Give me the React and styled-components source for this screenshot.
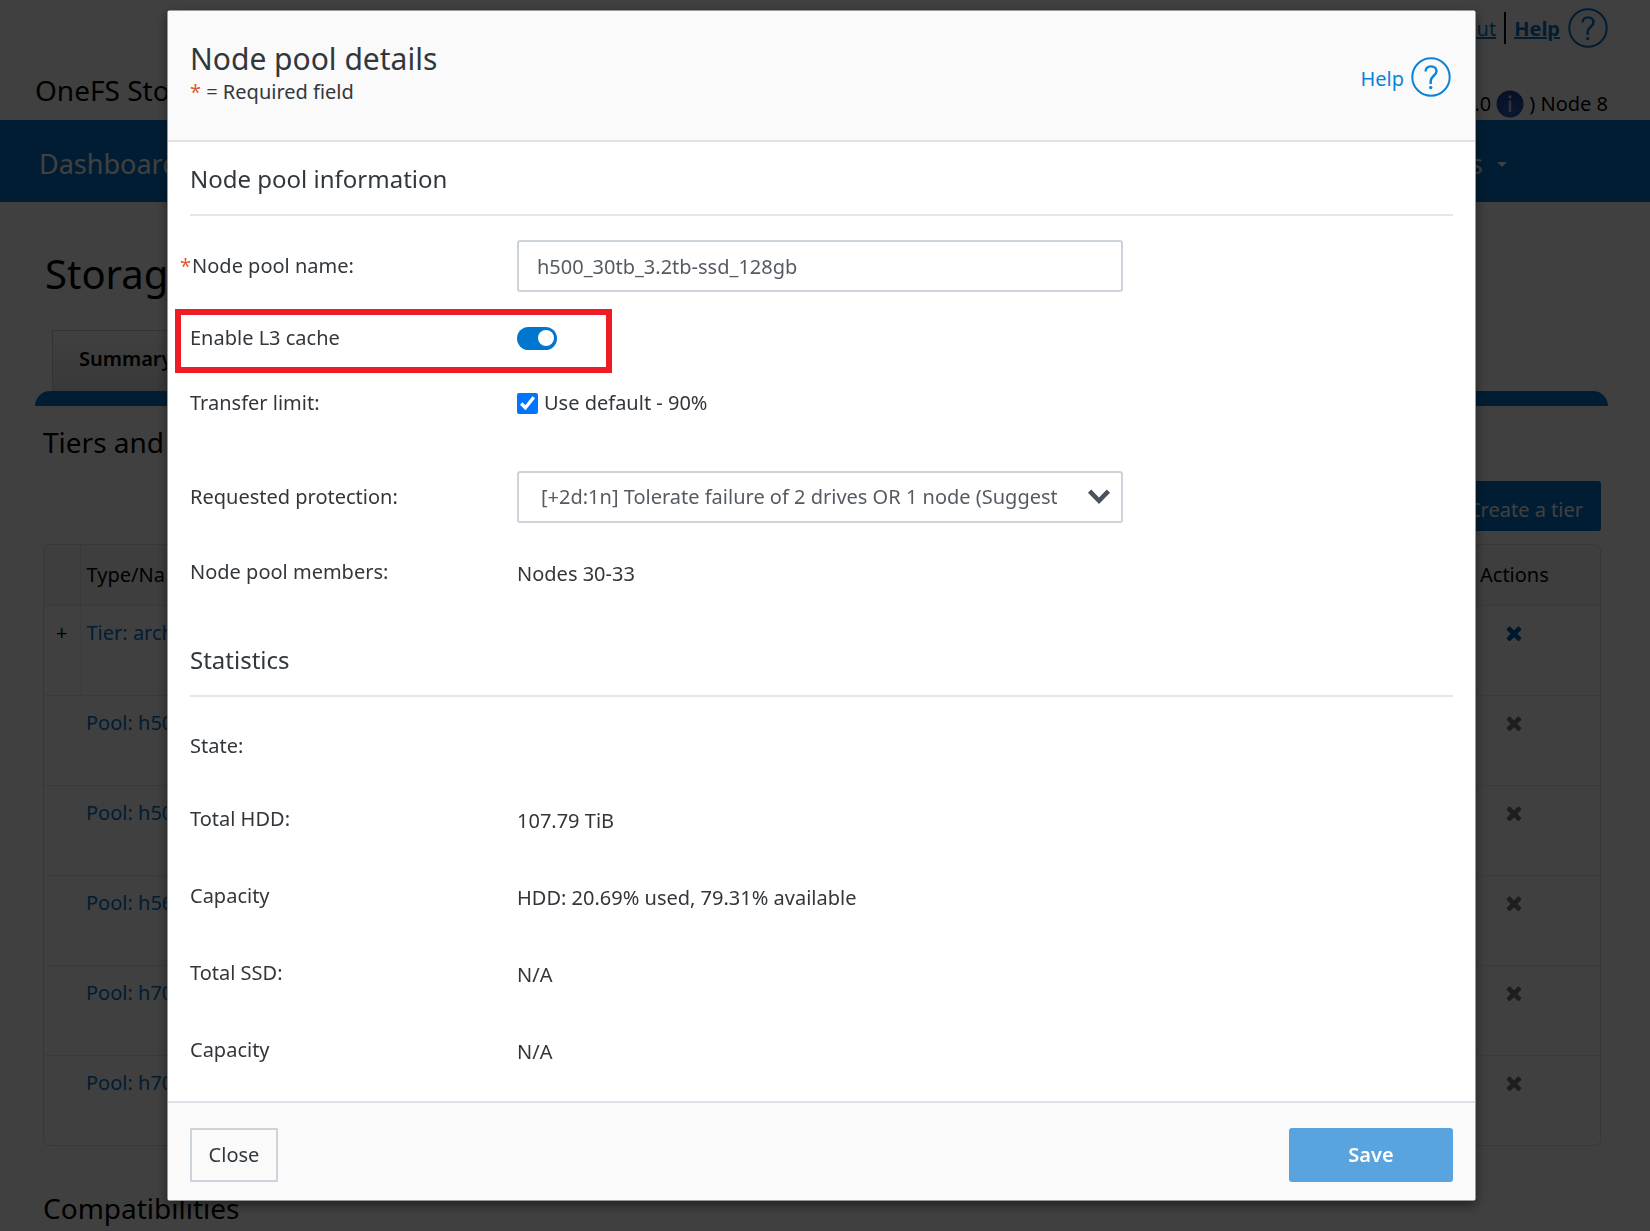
import React from "react";
import styled, { createGlobalStyle } from "styled-components";

const blue = "#0076ce";

const GlobalStyle = createGlobalStyle`
  *, *::before, *::after { box-sizing: border-box; }
  body {
    margin: 0;
    background: #fff;
    color: #000;
    font-family: "Noto Sans", "Open Sans", sans-serif;
    font-size: 20px;
    line-height: 28px;
  }
  button, input, select { font: inherit; color: inherit; }
  h1, h2, h3, p { margin: 0; font-weight: 400; }
`;

/* ---------- page behind the dialog ---------- */

const Page = styled.div`
  height: 100vh;
  overflow: hidden;
  background: #fff;
`;

const Masthead = styled.header`
  display: flex;
  justify-content: space-between;
  align-items: flex-end;
  height: 120px;
  padding: 0 42px 0 35px;
`;

const Product = styled.div`
  font-size: 28px;
  line-height: 36px;
  padding-bottom: 12px;
`;

const MastheadSide = styled.div`
  display: flex;
  flex-direction: column;
  align-items: flex-end;
  gap: 40px;
`;

const Links = styled.div`
  display: flex;
  align-items: center;
  gap: 8px;
  height: 40px;
`;

const MastLink = styled.a`
  padding-top: 2px;
  color: ${blue};
  font-weight: ${(p) => (p.$strong ? 700 : 400)};
`;

const IconLink = styled.a`
  display: flex;
  color: ${blue};
`;

const Bar = styled.span`
  width: 2px;
  height: 32px;
  background: #000;
`;

const ClusterInfo = styled.div`
  display: flex;
  align-items: center;
  gap: 5px;
  height: 32px;
`;

const NavBar = styled.nav`
  display: flex;
  justify-content: space-between;
  align-items: center;
  height: 82px;
  padding: 6px 143px 0 39px;
  background: ${blue};
`;

const NavItem = styled.a`
  display: flex;
  align-items: center;
  gap: 14px;
  color: #fff;
  font-size: 27px;
  line-height: 32px;
  text-decoration: none;
`;

const Caret = styled.span`
  border: 5px solid transparent;
  border-top-color: #fff;
  border-bottom: 0;
`;

const Main = styled.main`
  padding: 44px 42px 0 35px;
`;

const PageTitle = styled.h1`
  font-size: 40px;
  line-height: 56px;
  padding-left: 10px;
`;

const Tabs = styled.div`
  display: flex;
  margin-top: 28px;
  padding-left: 17px;
`;

const Tab = styled.button`
  height: 61px;
  padding: 0 26px 4px;
  border: 1px solid #ccc;
  border-bottom: 0;
  background: linear-gradient(#fff, #e0e0e0);
  font-weight: 600;
`;

const TabLine = styled.div`
  height: 15px;
  border-radius: 16px 16px 0 0;
  background: ${blue};
`;

const Panel = styled.section`
  padding: 16px 7px 0 8px;
`;

const PanelTitle = styled.h2`
  font-size: 28px;
  line-height: 40px;
`;

const Actions = styled.div`
  display: flex;
  justify-content: flex-end;
  padding: 19px 0 13px;
`;

const CreateButton = styled.button`
  height: 50px;
  padding: 8px 18px 0;
  border: 0;
  border-radius: 3px;
  background: ${blue};
  color: #fff;
`;

const TableFrame = styled.div`
  border: 1px solid #ddd;
  border-radius: 6px;
  overflow: hidden;
  margin-bottom: 42px;
`;

const Table = styled.table`
  width: 100%;
  border-collapse: collapse;
  table-layout: fixed;
`;

const HeadCell = styled.th`
  width: ${(p) => p.$width || "auto"};
  height: 60px;
  padding: ${(p) => (p.$action ? "0 0 0 4px" : "0 6px")};
  border-right: ${(p) => (p.$ruled ? "1px solid #ddd" : "0")};
  background: #f8f8f8;
  font-weight: 400;
  text-align: left;
`;

const Cell = styled.td`
  height: 90px;
  padding: 13px ${(p) => (p.$center ? "0" : "6px")};
  border-top: 1px solid #e8e8e8;
  border-right: ${(p) => (p.$ruled ? "1px solid #eee" : "0")};
  text-align: ${(p) => (p.$center ? "center" : "left")};
  vertical-align: top;
`;

const ActionCell = styled(Cell)`
  padding-left: 27px;
`;

const NameLink = styled.a`
  color: ${blue};
  text-decoration: none;
`;

const IconButton = styled.button`
  display: flex;
  padding: 3px 0;
  border: 0;
  background: none;
  color: ${(p) => (p.$active ? "#0060b0" : "#777")};
`;

const Expand = styled.button`
  padding: 0;
  border: 0;
  background: none;
`;

/* ---------- dialog ---------- */

const Backdrop = styled.div`
  position: fixed;
  inset: 0;
  display: flex;
  align-items: flex-start;
  padding: 10px 174px 0 167px;
  background: rgba(0, 0, 0, 0.75);
`;

const Dialog = styled.form`
  flex: 1;
  min-width: 0;
  border: 1px solid #999;
  border-radius: 3px;
  background: #fff;
  box-shadow: 0 4px 12px rgba(0, 0, 0, 0.5);
  color: #32373c;
`;

const DialogHeader = styled.header`
  display: flex;
  justify-content: space-between;
  align-items: flex-start;
  height: 131px;
  padding: 28px 22px 0;
  border-bottom: 2px solid #dfe2e8;
  background: #fafafa;
`;

const DialogTitle = styled.h2`
  font-size: 30px;
  line-height: 39px;
`;

const Star = styled.span`
  color: #e05a33;
`;

const HelpLink = styled.a`
  display: flex;
  align-items: center;
  gap: 7px;
  height: 76px;
  padding-right: 2px;
  color: #0a84d8;
  text-decoration: none;
`;

const HelpText = styled.span`
  padding-top: 4px;
`;

const DialogBody = styled.div`
  padding: 2px 22px 11px;
`;

const SectionTitle = styled.h3`
  display: flex;
  align-items: center;
  height: 72px;
  margin-bottom: 16px;
  border-bottom: 2px solid #e6e6e6;
  font-size: 24px;
  line-height: 32px;
`;

const Row = styled.div`
  position: relative;
  display: grid;
  grid-template-columns: 327px 1fr;
  align-items: center;
  min-height: ${(p) => p.$height}px;
  margin-bottom: ${(p) => p.$after || 0}px;
`;

const Label = styled.label`
  padding-bottom: ${(p) => (p.$raised ? 4 : 0)}px;
`;

const RequiredLabel = styled(Label)`
  display: flex;
  gap: 1px;
  margin-left: -10px;
`;

const control = `
  width: 100%;
  max-width: 606px;
  height: 52px;
  border: 2px solid #cdd3db;
  border-radius: 3px;
  background: #fff;
`;

const TextInput = styled.input`
  ${control}
  padding: 0 18px;
  color: #555b63;
`;

const SelectBox = styled.div`
  position: relative;
  max-width: 606px;

  svg {
    position: absolute;
    right: 12px;
    top: 14px;
    pointer-events: none;
  }
`;

const Select = styled.select`
  ${control}
  appearance: none;
  padding: 0 64px 0 22px;
  color: #555b63;
`;

const Switch = styled.input`
  appearance: none;
  display: flex;
  align-items: center;
  justify-content: flex-end;
  width: 40px;
  height: 23px;
  margin: 0;
  padding: 0 3px;
  border-radius: 12px;
  background: #0076ce;

  &::before {
    content: "";
    width: 16px;
    height: 16px;
    border-radius: 50%;
    background: #fff;
  }

  &:not(:checked) {
    justify-content: flex-start;
    background: #999;
  }
`;

const CheckLabel = styled.label`
  display: flex;
  align-items: center;
  gap: 6px;
`;

const Checkbox = styled.input`
  width: 21px;
  height: 21px;
  margin: 0;
  accent-color: #0075ff;
`;

const Highlight = styled.div`
  position: absolute;
  left: -15px;
  top: 7px;
  width: 437px;
  height: 64px;
  border: 6px solid #ee1c25;
  pointer-events: none;
`;

const DialogFooter = styled.footer`
  display: flex;
  justify-content: space-between;
  align-items: center;
  height: 99px;
  padding: 6px 22px 0;
  border-top: 2px solid #dfe2e8;
  background: #fafafa;
`;

const Button = styled.button`
  width: ${(p) => (p.$primary ? 164 : 88)}px;
  height: 54px;
  border: ${(p) => (p.$primary ? "0" : "2px solid #cdd3db")};
  border-radius: ${(p) => (p.$primary ? 3 : 1)}px;
  background: ${(p) => (p.$primary ? "#59a4de" : "#fafafa")};
  color: ${(p) => (p.$primary ? "#fff" : "#32373c")};
  font-weight: ${(p) => (p.$primary ? 600 : 400)};
`;

const HelpIcon = () => (
  <svg width="40" height="40" viewBox="0 0 40 40" fill="none" stroke="currentColor" aria-hidden="true">
    <circle cx="20" cy="20" r="18.7" strokeWidth="2" />
    <path d="M14.6 14.4c0-3.1 2.2-5 5.4-5s5.5 1.9 5.5 4.8c0 4.4-5.8 4.8-5.8 9.9v3" strokeWidth="2.4" />
    <circle cx="19.7" cy="30.6" r="1.7" fill="currentColor" stroke="none" />
  </svg>
);

const InfoIcon = () => (
  <svg width="28" height="28" viewBox="0 0 28 28" aria-hidden="true">
    <defs>
      <radialGradient id="ball" cx="50%" cy="75%" r="70%">
        <stop offset="0" stopColor="#2f62c8" />
        <stop offset="1" stopColor="#1b3f94" />
      </radialGradient>
    </defs>
    <circle cx="14" cy="14" r="13.5" fill="url(#ball)" />
    <circle cx="14" cy="6.8" r="1.6" fill="#ccc" />
    <path d="M14 10.4v11.6" stroke="#ccc" strokeWidth="2.4" />
  </svg>
);

const CrossIcon = () => (
  <svg width="22" height="22" viewBox="0 0 1792 1792" fill="currentColor" aria-hidden="true">
    <path d="M1490 1322q0 40-28 68l-136 136q-28 28-68 28t-68-28l-294-294-294 294q-28 28-68 28t-68-28l-136-136q-28-28-28-68t28-68l294-294-294-294q-28-28-28-68t28-68l136-136q28-28 68-28t68 28l294 294 294-294q28-28 68-28t68 28l136 136q28 28 28 68t-28 68l-294 294 294 294q28 28 28 68z" />
  </svg>
);

const Chevron = () => (
  <svg width="24" height="24" viewBox="0 0 24 24" fill="none" stroke="#4a525b" strokeWidth="4.6" aria-hidden="true">
    <path d="M2.6 6.2 12 15.8l9.4-9.6" />
  </svg>
);

const pools = ["Tier: arch", "Pool: h50", "Pool: h50", "Pool: h56", "Pool: h70", "Pool: h70"];
const stats = [
  ["State:", ""],
  ["Total HDD:", "107.79 TiB"],
  ["Capacity", "HDD: 20.69% used, 79.31% available"],
  ["Total SSD:", "N/A"],
  ["Capacity", "N/A"],
];

export default function App() {
  return (
    <>
      <GlobalStyle />
      <Page>
        <Masthead>
          <Product>OneFS Sto</Product>
          <MastheadSide>
            <Links>
              <MastLink href="#logout">Log out</MastLink>
              <Bar />
              <MastLink href="#help" $strong>Help</MastLink>
              <IconLink href="#help" aria-label="Help"><HelpIcon /></IconLink>
            </Links>
            <ClusterInfo>
              <span>.0</span>
              <InfoIcon />
              <span>) Node 8</span>
            </ClusterInfo>
          </MastheadSide>
        </Masthead>
        <NavBar>
          <NavItem href="#dashboard">Dashboard</NavItem>
          <NavItem href="#protocols">Protocols<Caret /></NavItem>
        </NavBar>
        <Main>
          <PageTitle>Storag</PageTitle>
          <Tabs><Tab type="button">Summary</Tab></Tabs>
          <TabLine />
          <Panel>
            <PanelTitle>Tiers and</PanelTitle>
            <Actions><CreateButton type="button">Create a tier</CreateButton></Actions>
            <TableFrame>
              <Table>
                <thead>
                  <tr>
                    <HeadCell $width="36px" $ruled />
                    <HeadCell>Type/Na</HeadCell>
                    <HeadCell $width="124px" $action>Actions</HeadCell>
                  </tr>
                </thead>
                <tbody>
                  {pools.map((name, i) => (
                    <tr key={i}>
                      <Cell $center $ruled={i === 0}>{i === 0 && <Expand type="button">+</Expand>}</Cell>
                      <Cell><NameLink href="#pool">{name}</NameLink></Cell>
                      <ActionCell>
                        <IconButton type="button" aria-label="Delete" $active={i === 0}><CrossIcon /></IconButton>
                      </ActionCell>
                    </tr>
                  ))}
                </tbody>
              </Table>
            </TableFrame>
            <PanelTitle>Compatibilities</PanelTitle>
          </Panel>
        </Main>
      </Page>

      <Backdrop>
        <Dialog role="dialog" aria-labelledby="dialog-title" onSubmit={(e) => e.preventDefault()}>
          <DialogHeader>
            <div>
              <DialogTitle id="dialog-title">Node pool details</DialogTitle>
              <p><Star>*</Star> = Required field</p>
            </div>
            <HelpLink href="#help"><HelpText>Help</HelpText><HelpIcon /></HelpLink>
          </DialogHeader>
          <DialogBody>
            <SectionTitle>Node pool information</SectionTitle>
            <Row $height={68} $after={2}>
              <RequiredLabel htmlFor="pool-name"><Star>*</Star><span>Node pool name:</span></RequiredLabel>
              <TextInput id="pool-name" defaultValue="h500_30tb_3.2tb-ssd_128gb" />
            </Row>
            <Row $height={72}>
              <Label htmlFor="l3-cache">Enable L3 cache</Label>
              <Switch id="l3-cache" type="checkbox" role="switch" defaultChecked />
              <Highlight />
            </Row>
            <Row $height={58} $after={30}>
              <span>Transfer limit:</span>
              <CheckLabel><Checkbox type="checkbox" defaultChecked />Use default - 90%</CheckLabel>
            </Row>
            <Row $height={70}>
              <Label htmlFor="protection">Requested protection:</Label>
              <SelectBox>
                <Select id="protection">
                  <option>[+2d:1n] Tolerate failure of 2 drives OR 1 node (Suggested)</option>
                </Select>
                <Chevron />
              </SelectBox>
            </Row>
            <Row $height={84} $after={9}>
              <Label as="span" $raised>Node pool members:</Label>
              <span>Nodes 30-33</span>
            </Row>
            <SectionTitle>Statistics</SectionTitle>
            {stats.map(([label, value], i) => (
              <Row $height={value ? 77 : 69} key={i}>
                <Label as="span" $raised>{label}</Label>
                <span>{value}</span>
              </Row>
            ))}
          </DialogBody>
          <DialogFooter>
            <Button type="button">Close</Button>
            <Button type="submit" $primary>Save</Button>
          </DialogFooter>
        </Dialog>
      </Backdrop>
    </>
  );
}
